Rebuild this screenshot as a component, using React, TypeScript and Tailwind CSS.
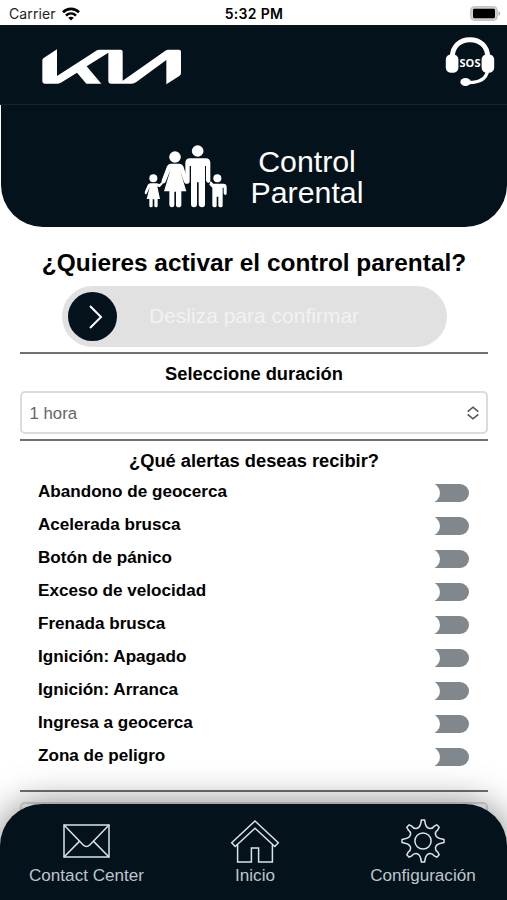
import { useState } from "react"

const ALERTS = [
  "Abandono de geocerca",
  "Acelerada brusca",
  "Botón de pánico",
  "Exceso de velocidad",
  "Frenada brusca",
  "Ignición: Apagado",
  "Ignición: Arranca",
  "Ingresa a geocerca",
  "Zona de peligro",
]

function WifiIcon() {
  return (
    <svg width="18" height="14" viewBox="0 0 18 14" fill="none" stroke="#000" strokeWidth="2.6">
      <path d="M1 5.2C5.6 0.7 12.4 0.7 17 5.2" />
      <path d="M4 8.6C6.9 5.8 11.1 5.8 14 8.6" />
      <path d="M9 13.6L6.2 10.8C7.8 9.3 10.2 9.3 11.8 10.8Z" fill="#000" stroke="none" />
    </svg>
  )
}

function BatteryIcon() {
  return (
    <svg width="31" height="15" viewBox="0 0 31 15">
      <rect x="0.7" y="0.7" width="26.6" height="13.6" rx="3.6" fill="#d2d2d2" stroke="#bbb" strokeWidth="1" />
      <rect x="3" y="2.8" width="22" height="9.4" rx="1.4" fill="#000" />
      <path d="M28.6 5.2C30.6 5.8 30.6 9.2 28.6 9.8Z" fill="#aaa" />
    </svg>
  )
}

function KiaLogo() {
  return (
    <svg width="140" height="36" viewBox="125 147 420 108" fill="#fff">
      <path d="M126 181Q126 177 130 174L170 148V228L290 151Q293 149 297 149H361Q367 149 367 155V242L495 152Q499 149 504 149H536Q542 149 542 155V219Q542 224 538 227L498 253V180L407 247Q401 251 394 251H331Q324 251 324 244V158L259 199L303 251H258L230 218L184 247Q178 251 172 251H133Q126 251 126 244Z" />
    </svg>
  )
}

function SosIcon() {
  return (
    <svg width="50" height="50" viewBox="0 0 50 50">
      <path d="M7.4 20C7.4 9 15 2.8 25 2.8S42.6 9 42.6 20" fill="none" stroke="#fff" strokeWidth="5" />
      <path d="M42.6 34C41 42 34 46.2 21 45.4" fill="none" stroke="#fff" strokeWidth="3.4" />
      <ellipse cx="20.5" cy="45" rx="5.2" ry="4" fill="#fff" />
      <rect x="0.8" y="17.2" width="12.6" height="18.6" rx="5.4" fill="#fff" />
      <rect x="36.6" y="17.2" width="12.6" height="18.6" rx="5.4" fill="#fff" />
      <text x="25" y="30.2" textAnchor="middle" fontFamily="Open Sans, sans-serif" fontWeight="700" fontSize="11" fill="#fff">
        SOS
      </text>
    </svg>
  )
}

function FamilyIcon() {
  return (
    <svg width="83" height="63" viewBox="43 43 249 189" fill="#fff">
      {/* daughter */}
      <circle cx="71" cy="143" r="12" />
      <path d="M62 158H80L90 160L96 154L100 159L90 170L83 167L91 205H84V226Q84 230 79 230T74 226V206H69V226Q69 230 64 230T59 226V205H51L60 170L52 188Q49 193 46 189Q44 186 46 182L54 163Q57 158 62 158Z" />
      {/* mother */}
      <circle cx="136" cy="79" r="17.5" />
      <path d="M123 99H149Q158 99 161 107L175 150Q176 158 169 159Q165 159 163 154L151 119L170 182H155V223Q155 230 147 230T139 223V183H134V223Q134 230 127 230T119 223V182H103L122 119L108 153Q105 160 99 158Q94 156 96 149L112 107Q115 99 123 99Z" />
      {/* father */}
      <circle cx="204" cy="61" r="17.5" />
      <path d="M181 83H228Q242 83 242 97V149Q242 157 236 157T229 149V106H226V220Q226 230 217 230T207 220V155H202V220Q202 230 193 230T184 220V106H180V151Q180 159 173 159T167 151V97Q167 83 181 83Z" />
      {/* son */}
      <circle cx="263" cy="143" r="12" />
      <path d="M243 151L251 159H281Q291 159 291 169V188Q291 193 287 193T282 188V171H279V225Q279 230 273 230T266 225V198H261V225Q261 230 255 230T248 225V171L239 162Z" />
    </svg>
  )
}

function MailIcon() {
  return (
    <svg width="47" height="35" viewBox="0 0 47 35" fill="none" stroke="#dce3e7" strokeWidth="1.5">
      <rect x="1" y="1" width="45" height="32" />
      <path d="M1 1L20 20.8Q23.5 24.4 27 20.8L46 1M1 33L16.4 17.4M46 33L30.6 17.4" />
    </svg>
  )
}

function HomeIcon() {
  return (
    <svg width="50" height="44" viewBox="0 0 50 44" fill="none" stroke="#dce3e7" strokeWidth="1.5">
      <path d="M25 1L48.3 22.8L44.8 26.5L25 8.2L5.2 26.5L1.7 22.8Z" />
      <path d="M7.6 24.5V42H21.4V28H28.6V42H42.4V24.5" />
    </svg>
  )
}

function GearIcon() {
  return (
    <svg width="44" height="44" viewBox="0 0 44 44" fill="none" stroke="#dce3e7" strokeWidth="1.5" strokeLinejoin="round">
      <circle cx="22" cy="22" r="8.1" />
      <path d="M20.4 1H23.6L24.4 5Q25.4 9 28.8 9.6Q31.4 9.8 33.2 7.2L35.8 5.8L38.2 8.2L36.8 10.8Q34.2 12.6 34.4 15.2Q35 18.6 39 19.6L43 20.4V23.6L39 24.4Q35 25.4 34.4 28.8Q34.2 31.4 36.8 33.2L38.2 35.8L35.8 38.2L33.2 36.8Q31.4 34.2 28.8 34.4Q25.4 35 24.4 39L23.6 43H20.4L19.6 39Q18.6 35 15.2 34.4Q12.6 34.2 10.8 36.8L8.2 38.2L5.8 35.8L7.2 33.2Q9.8 31.4 9.6 28.8Q9 25.4 5 24.4L1 23.6V20.4L5 19.6Q9 18.6 9.6 15.2Q9.8 12.6 7.2 10.8L5.8 8.2L8.2 5.8L10.8 7.2Q12.6 9.8 15.2 9.6Q18.6 9 19.6 5Z" />
    </svg>
  )
}

function Toggle({ on, onClick, label }: { on: boolean; onClick: () => void; label: string }) {
  return (
    <button
      role="switch"
      aria-checked={on}
      aria-label={label}
      onClick={onClick}
      className={`relative h-[18px] w-9 overflow-hidden rounded-r-full ${on ? "bg-[#04121c]" : "bg-[#80888d]"}`}
    >
      <span className={`absolute -top-px size-5 rounded-full bg-white ${on ? "right-0" : "-left-[13px]"}`} />
    </button>
  )
}

export default function App() {
  const [active, setActive] = useState<string[]>([])

  const toggle = (name: string) => {
    setActive((prev) => (prev.includes(name) ? prev.filter((n) => n !== name) : [...prev, name]))
  }

  return (
    <div className="relative flex h-[900px] w-[507px] flex-col overflow-hidden bg-white font-['Liberation_Sans',sans-serif] text-black">
      {/* Status bar */}
      <div className="grid h-[25px] shrink-0 grid-cols-3 items-center pt-0.5 pr-1.5 pl-[9px] font-['Inter',sans-serif] text-[14px] leading-none">
        <div className="flex items-center gap-1.5">
          <span className="tracking-[0.1px] text-[#222]">Carrier</span>
          <WifiIcon />
        </div>
        <span className="pr-0.5 text-center font-semibold tracking-[0.3px]">5:32 PM</span>
        <div className="flex justify-end">
          <BatteryIcon />
        </div>
      </div>

      {/* Header */}
      <header className="flex h-20 shrink-0 items-start justify-between border-b border-[#17242e] bg-[#04121c] pt-3 pr-3 pl-[41.5px]">
        <div className="pt-3">
          <KiaLogo />
        </div>
        <SosIcon />
      </header>

      <section className="ml-px flex h-[122px] shrink-0 items-start rounded-b-[42px] bg-[#04121c] pt-10 pl-[143px]">
        <FamilyIcon />
        <h1 className="ml-4 w-32 pt-px text-center text-[30.3px] leading-[31px] text-white">
          Control Parental
        </h1>
      </section>

      <main className="flex flex-col pr-[19px] pl-5">
        <h2 className="mt-[21px] text-center text-[24.4px] leading-[30px] font-bold whitespace-nowrap">
          ¿Quieres activar el control parental?
        </h2>
        <div className="mt-2 ml-[42px] flex h-[61px] w-[385px] items-center rounded-full bg-[#e1e1e1] pl-1.5">
          <button className="flex size-[49px] items-center justify-center rounded-full bg-[#04121c]">
            <svg width="14" height="24" viewBox="0 0 14 24" fill="none" stroke="#fff" strokeWidth="2" className="ml-1.5">
              <path d="M1 1L12 12L1 23" />
            </svg>
          </button>
          <span className="ml-8 pb-px text-[21px] text-[#f2f2f2]">Desliza para confirmar</span>
        </div>

        <hr className="mt-[5px] border-t-2 border-[#707070]" />
        <h3 className="mt-2 text-center text-[18.3px] leading-6 font-bold">Seleccione duración</h3>
        <div className="mt-[5px] flex h-[43px] items-center justify-between rounded-[5px] border-2 border-[#dcdcdc] pr-[7px] pl-[7.5px] text-[16.8px] text-[#666]">
          <span className="pt-0.5">1 hora</span>
          <svg width="12" height="14" viewBox="0 0 12 14" fill="none" stroke="#555" strokeWidth="1.6">
            <path d="M0.7 5.7L6 1.2L11.3 5.7M0.7 8.3L6 12.8L11.3 8.3" />
          </svg>
        </div>
        <hr className="mt-[5px] border-t-2 border-[#707070]" />
        <h3 className="mt-2 text-center text-[18.3px] leading-6 font-bold">¿Qué alertas deseas recibir?</h3>

        <ul className="mt-[3px] pr-[19px] pl-[18px]">
          {ALERTS.map((name) => (
            <li key={name} className="flex h-[33px] items-center justify-between">
              <span className="pb-px text-[17.1px] leading-5 font-bold">{name}</span>
              <Toggle label={name} on={active.includes(name)} onClick={() => toggle(name)} />
            </li>
          ))}
        </ul>
        <hr className="mt-[17px] border-t-2 border-[#707070]" />
        <div className="mt-2.5 h-[42px] shrink-0 rounded-[5px] border-2 border-[#dcdcdc]" />
      </main>

      <nav className="absolute inset-x-0 bottom-0 h-24 rounded-t-[42px] bg-[#04121c] text-[17.1px] leading-5 text-[#bdc6cc] shadow-[0_0_36px_rgba(0,0,0,0.5)]">
        <div className="flex h-full pt-4">
          <a className="flex w-[173px] shrink-0 flex-col items-center justify-between pb-[14px]">
            <span className="pt-1"><MailIcon /></span>
            <span>Contact Center</span>
          </a>
          <a className="flex w-[164px] shrink-0 flex-col items-center justify-between pb-[14px]">
            <HomeIcon />
            <span>Inicio</span>
          </a>
          <a className="flex w-[172px] shrink-0 flex-col items-center justify-between pb-[14px]">
            <span className="-mt-px"><GearIcon /></span>
            <span>Configuración</span>
          </a>
        </div>
      </nav>
    </div>
  )
}
